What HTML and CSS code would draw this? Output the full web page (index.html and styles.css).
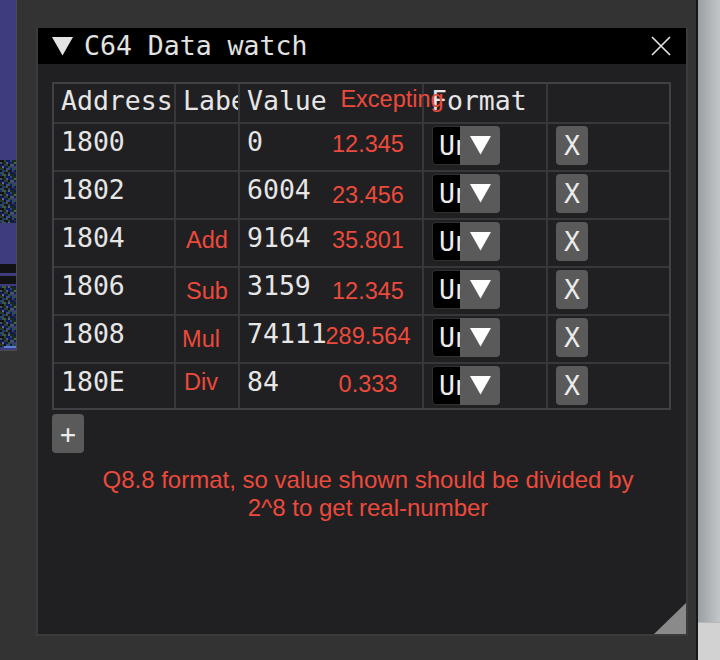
FILE: index.html
```html
<!DOCTYPE html>
<html>
<head>
<meta charset="utf-8">
<title>C64 Data watch</title>
<link rel="stylesheet" href="styles.css">
</head>
<body>
<div class="screen">
  <div class="side-left">
    <svg width="16" height="350" viewBox="0 0 16 350">
      <defs>
        <pattern id="noise" width="16" height="16" patternUnits="userSpaceOnUse">
          <rect x="0" y="0" width="4" height="2" fill="#111"/>
          <rect x="4" y="0" width="2" height="2" fill="#2b4a3a"/>
          <rect x="6" y="0" width="4" height="2" fill="#0b1a5c"/>
          <rect x="10" y="0" width="2" height="2" fill="#3c3c7c"/>
          <rect x="12" y="0" width="4" height="2" fill="#1a2a1a"/>
          <rect x="0" y="2" width="2" height="2" fill="#3a5a58"/>
          <rect x="2" y="2" width="4" height="2" fill="#222"/>
          <rect x="6" y="2" width="2" height="2" fill="#4a5a8a"/>
          <rect x="8" y="2" width="4" height="2" fill="#102060"/>
          <rect x="12" y="2" width="2" height="2" fill="#2a2a2a"/>
          <rect x="14" y="2" width="2" height="2" fill="#3a6a5a"/>
          <rect x="0" y="4" width="4" height="2" fill="#0d1650"/>
          <rect x="4" y="4" width="4" height="2" fill="#2f3f2f"/>
          <rect x="8" y="4" width="2" height="2" fill="#111"/>
          <rect x="10" y="4" width="4" height="2" fill="#405a70"/>
          <rect x="14" y="4" width="2" height="2" fill="#1a1a3a"/>
          <rect x="0" y="6" width="2" height="2" fill="#252525"/>
          <rect x="2" y="6" width="2" height="2" fill="#5a6aa0"/>
          <rect x="4" y="6" width="4" height="2" fill="#10204a"/>
          <rect x="8" y="6" width="4" height="2" fill="#334a3a"/>
          <rect x="12" y="6" width="4" height="2" fill="#3e3c7e"/>
          <rect x="0" y="8" width="4" height="2" fill="#2a3a2a"/>
          <rect x="4" y="8" width="2" height="2" fill="#111"/>
          <rect x="6" y="8" width="4" height="2" fill="#3a4a7a"/>
          <rect x="10" y="8" width="2" height="2" fill="#0b1a5c"/>
          <rect x="12" y="8" width="4" height="2" fill="#2e4e4a"/>
          <rect x="0" y="10" width="2" height="2" fill="#111"/>
          <rect x="2" y="10" width="4" height="2" fill="#1e3a6a"/>
          <rect x="6" y="10" width="2" height="2" fill="#445544"/>
          <rect x="8" y="10" width="4" height="2" fill="#1a1a1a"/>
          <rect x="12" y="10" width="2" height="2" fill="#3c3c7c"/>
          <rect x="14" y="10" width="2" height="2" fill="#101a50"/>
          <rect x="0" y="12" width="4" height="2" fill="#33485a"/>
          <rect x="4" y="12" width="4" height="2" fill="#151515"/>
          <rect x="8" y="12" width="2" height="2" fill="#2a4a3a"/>
          <rect x="10" y="12" width="4" height="2" fill="#0c1a58"/>
          <rect x="14" y="12" width="2" height="2" fill="#2a2a2a"/>
          <rect x="0" y="14" width="2" height="2" fill="#1a2a5a"/>
          <rect x="2" y="14" width="4" height="2" fill="#3a5a4a"/>
          <rect x="6" y="14" width="2" height="2" fill="#222"/>
          <rect x="8" y="14" width="2" height="2" fill="#5a5a9a"/>
          <rect x="10" y="14" width="4" height="2" fill="#1b2b1b"/>
          <rect x="14" y="14" width="2" height="2" fill="#0e1860"/>
        </pattern>
      </defs>
      <rect width="16" height="350" fill="#3e3c7e"/>
      <rect y="160" width="16" height="63" fill="url(#noise)"/>
      <rect y="264" width="16" height="9" fill="#121214"/>
      <rect y="276" width="16" height="8" fill="#121214"/>
      <rect y="286" width="16" height="61" fill="url(#noise)"/>
      <rect x="4" y="346" width="12" height="2" fill="#5a80d0"/>
    </svg>
  </div>

  <div class="desk">
    <div class="window">
      <div class="titlebar">
        <svg class="title-arrow" width="21" height="19" viewBox="0 0 21 19"><polygon points="0,0 21,0 10.5,18.5" fill="#e4e4e4"/></svg>
        <span class="title">C64 Data watch</span>
        <svg class="title-close" width="20" height="20" viewBox="0 0 20 20"><path d="M1 1 L19 19 M19 1 L1 19" stroke="#e0e0e0" stroke-width="1.7" fill="none"/></svg>
      </div>

      <div class="body">
        <div class="table">
          <div class="cell head">Address</div>
          <div class="cell head clip">Label</div>
          <div class="cell head">Value<span class="note hdr">Excepting</span></div>
          <div class="cell head">Format</div>
          <div class="cell head"></div>

          <div class="cell">1800</div>
          <div class="cell"></div>
          <div class="cell">0<span class="note val">12.345</span></div>
          <div class="cell ctl"><div class="combo"><span class="combo-text">Unsigned</span><span class="combo-arrow"><svg width="21" height="19" viewBox="0 0 21 19"><polygon points="0,0 21,0 10.5,18.5" fill="#fff"/></svg></span></div></div>
          <div class="cell ctl"><button class="btn">X</button></div>

          <div class="cell">1802</div>
          <div class="cell"></div>
          <div class="cell">6004<span class="note val low">23.456</span></div>
          <div class="cell ctl"><div class="combo"><span class="combo-text">Unsigned</span><span class="combo-arrow"><svg width="21" height="19" viewBox="0 0 21 19"><polygon points="0,0 21,0 10.5,18.5" fill="#fff"/></svg></span></div></div>
          <div class="cell ctl"><button class="btn">X</button></div>

          <div class="cell">1804</div>
          <div class="cell"><span class="note lab">Add</span></div>
          <div class="cell">9164<span class="note val">35.801</span></div>
          <div class="cell ctl"><div class="combo"><span class="combo-text">Unsigned</span><span class="combo-arrow"><svg width="21" height="19" viewBox="0 0 21 19"><polygon points="0,0 21,0 10.5,18.5" fill="#fff"/></svg></span></div></div>
          <div class="cell ctl"><button class="btn">X</button></div>

          <div class="cell">1806</div>
          <div class="cell"><span class="note lab low">Sub</span></div>
          <div class="cell">3159<span class="note val low">12.345</span></div>
          <div class="cell ctl"><div class="combo"><span class="combo-text">Unsigned</span><span class="combo-arrow"><svg width="21" height="19" viewBox="0 0 21 19"><polygon points="0,0 21,0 10.5,18.5" fill="#fff"/></svg></span></div></div>
          <div class="cell ctl"><button class="btn">X</button></div>

          <div class="cell">1808</div>
          <div class="cell"><span class="note lab shift low">Mul</span></div>
          <div class="cell">74111<span class="note val">289.564</span></div>
          <div class="cell ctl"><div class="combo"><span class="combo-text">Unsigned</span><span class="combo-arrow"><svg width="21" height="19" viewBox="0 0 21 19"><polygon points="0,0 21,0 10.5,18.5" fill="#fff"/></svg></span></div></div>
          <div class="cell ctl"><button class="btn">X</button></div>

          <div class="cell">180E</div>
          <div class="cell"><span class="note lab shift high">Div</span></div>
          <div class="cell">84<span class="note val">0.333</span></div>
          <div class="cell ctl"><div class="combo"><span class="combo-text">Unsigned</span><span class="combo-arrow"><svg width="21" height="19" viewBox="0 0 21 19"><polygon points="0,0 21,0 10.5,18.5" fill="#fff"/></svg></span></div></div>
          <div class="cell ctl"><button class="btn">X</button></div>
        </div>

        <button class="btn add">+</button>

        <p class="remark">Q8.8 format, so value shown should be divided by<br>2^8 to get real-number</p>

        <div class="grip"></div>
      </div>
    </div>
  </div>

  <div class="divider"></div>
  <div class="side-right"></div>
</div>
</body>
</html>
```

FILE: styles.css
```css
* {
  box-sizing: border-box;
}

html,
body {
  margin: 0;
}

body {
  width: 720px;
  height: 660px;
  overflow: hidden;
  background: #333333;
  font-family: "DejaVu Sans Mono", monospace;
}

.screen {
  display: flex;
  height: 660px;
}

.side-left {
  flex: none;
  width: 17px;
  height: 351px;
  border-right: 1px solid #4b4b4b;
  border-bottom: 1px solid #4b4b4b;
}

.side-left svg {
  display: block;
}

.desk {
  flex: 1;
  padding: 28px 0 0 19px;
}

.window {
  width: 652px;
  height: 608px;
  display: flex;
  flex-direction: column;
  background: #201f21;
  border: 2px solid #3b3b3b;
  border-top: 0;
}

.titlebar {
  flex: none;
  height: 36px;
  display: flex;
  align-items: center;
  padding: 0 15px 0 14px;
  background: #000;
  color: #e2e2e2;
  font-size: 26.5px;
  line-height: 30px;
}

.title-arrow {
  display: block;
  margin-right: 11px;
}

.title {
  flex: 1;
  white-space: nowrap;
}

.title-close {
  display: block;
}

.body {
  flex: 1;
  position: relative;
  padding: 18px 14px 0;
}

.table {
  display: grid;
  grid-template-columns: 120px 62px 182px 122px 121px;
  grid-template-rows: 38px repeat(5, 46px) 44px;
  gap: 2px;
  width: 619px;
  border: 2px solid #414145;
  background: #37373b;
}

.cell {
  position: relative;
  background: #201f21;
  color: #e6e6e6;
  font-size: 26.5px;
  line-height: 30px;
  padding: 3px 0 0 7px;
  white-space: nowrap;
}

.head {
  padding-top: 2px;
}

.clip {
  overflow: hidden;
}

.ctl {
  padding: 2px 0 0 8px;
}

.note {
  position: absolute;
  z-index: 2;
  top: 8px;
  transform: translateX(-50%);
  font-family: "Liberation Sans", Arial, sans-serif;
  font-size: 23.5px;
  line-height: 24px;
  color: #ec4a3c;
  white-space: nowrap;
}

.note.low {
  top: 10.5px;
}

.note.high {
  top: 6px;
}

.note.val {
  left: 128px;
}

.note.lab {
  left: 31px;
}

.note.lab.shift {
  left: 25px;
}

.note.hdr {
  left: 152px;
  top: 3px;
}

.combo {
  display: flex;
  width: 68px;
  height: 39px;
}

.combo-text {
  width: 28px;
  overflow: hidden;
  background: #000;
  border: 1px solid #2e2e2e;
  border-right: 0;
  border-radius: 4px 0 0 4px;
  color: #ededed;
  padding-left: 6px;
  line-height: 37px;
}

.combo-arrow {
  width: 40px;
  display: flex;
  align-items: center;
  justify-content: center;
  background: #5a5a5a;
  border-radius: 0 4px 4px 0;
}

.combo-arrow svg {
  display: block;
}

.btn {
  display: block;
  width: 32px;
  height: 39px;
  padding: 0;
  border: 0;
  border-radius: 4px;
  background: #5a5a5a;
  color: #ececec;
  font-family: "DejaVu Sans Mono", monospace;
  font-size: 26.5px;
  line-height: 39px;
  text-align: center;
}

.add {
  margin-top: 4px;
}

.remark {
  margin: 13px 0 0;
  padding-left: 12px;
  text-align: center;
  font-family: "Liberation Sans", Arial, sans-serif;
  font-size: 24px;
  line-height: 28px;
  color: #ec4a3c;
}

.grip {
  position: absolute;
  right: 0;
  bottom: 0;
  width: 32px;
  height: 31px;
  background: #8a8a8a;
  clip-path: polygon(100% 0, 100% 100%, 0 100%);
}

.divider {
  flex: none;
  width: 2px;
  background: #171717;
}

.side-right {
  flex: none;
  width: 22px;
  background:
    linear-gradient(to bottom, transparent 622px, #b8b8b8 622px, #b8b8b8 623px, #d2d2d2 623px),
    linear-gradient(to right, #9b9fa3, #c3c6c9);
}
```
